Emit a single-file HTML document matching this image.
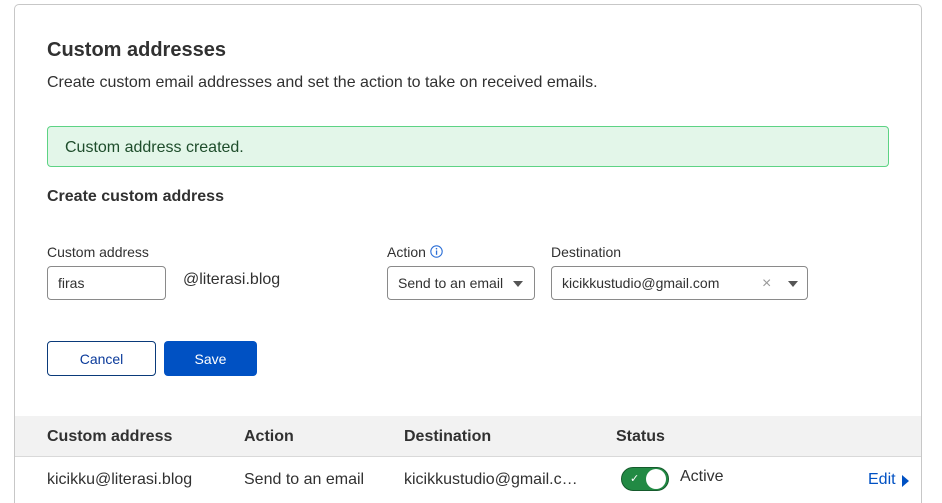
<!DOCTYPE html><html><head><style>
html,body{margin:0;width:942px;height:503px;overflow:hidden}
body{background:#fff;font-family:"Liberation Sans",sans-serif;color:#313131;position:relative}
.a{position:absolute;white-space:nowrap}
.card{position:absolute;left:14px;top:4px;width:906px;height:498px;border:1px solid #c7c7c7;border-bottom:none;border-radius:5px 5px 0 0}
.inp{position:absolute;border:1px solid #8a8a8a;border-radius:4px;height:34px;box-sizing:border-box;font-size:14px;line-height:33px;padding-left:10px}
.tri{position:absolute;width:0;height:0;border-left:5px solid transparent;border-right:5px solid transparent;border-top:6px solid #555}
</style></head><body>
<div class="card"></div>
<div class="a" style="left:47px;top:39px;font-size:20px;font-weight:bold">Custom addresses</div>
<div class="a" style="left:47px;top:74px;font-size:16px">Create custom email addresses and set the action to take on received emails.</div>
<div class="a" style="left:47px;top:126px;width:840px;height:39px;background:#e3f6e9;border:1px solid #5dd384;border-radius:4px"></div>
<div class="a" style="left:65px;top:139px;font-size:16px;color:#1e4d2b">Custom address created.</div>
<div class="a" style="left:47px;top:188px;font-size:16px;font-weight:bold">Create custom address</div>
<div class="a" style="left:47px;top:244px;font-size:14px">Custom address</div>
<div class="a" style="left:387px;top:244px;font-size:14px">Action</div>
<svg class="a" style="left:430px;top:245px" width="13" height="13" viewBox="0 0 13 13"><circle cx="6.5" cy="6.5" r="5.7" fill="none" stroke="#2c6fd6" stroke-width="1.1"/><rect x="5.9" y="5.5" width="1.3" height="4.3" fill="#2c6fd6"/><circle cx="6.5" cy="3.7" r=".8" fill="#2c6fd6"/></svg>
<div class="a" style="left:551px;top:244px;font-size:14px">Destination</div>
<div class="inp" style="left:47px;top:266px;width:119px">firas</div>
<div class="a" style="left:183px;top:271px;font-size:16px">@literasi.blog</div>
<div class="inp" style="left:387px;top:266px;width:148px">Send to an email</div>
<div class="tri" style="left:513px;top:281px"></div>
<div class="inp" style="left:551px;top:266px;width:257px">kicikkustudio@gmail.com</div>
<div class="a" style="left:762px;top:275px;font-size:16px;color:#999">×</div>
<div class="tri" style="left:788px;top:281px"></div>
<div class="a" style="left:47px;top:341px;width:107px;height:33px;border:1px solid #0a3a7a;border-radius:4px;color:#0a3a9a;font-size:14px;text-align:center;line-height:35px">Cancel</div>
<div class="a" style="left:164px;top:341px;width:93px;height:35px;background:#0051c3;border-radius:4px;color:#fff;font-size:14px;text-align:center;line-height:37px">Save</div>
<div class="a" style="left:15px;top:416px;width:906px;height:40px;background:#f2f2f2;border-bottom:1px solid #d9d9d9"></div>
<div class="a" style="left:47px;top:428px;font-size:16px;font-weight:bold">Custom address</div>
<div class="a" style="left:244px;top:428px;font-size:16px;font-weight:bold">Action</div>
<div class="a" style="left:404px;top:428px;font-size:16px;font-weight:bold">Destination</div>
<div class="a" style="left:616px;top:428px;font-size:16px;font-weight:bold">Status</div>
<div class="a" style="left:47px;top:471px;font-size:16px">kicikku@literasi.blog</div>
<div class="a" style="left:244px;top:471px;font-size:16px">Send to an email</div>
<div class="a" style="left:404px;top:471px;font-size:16px">kicikkustudio@gmail.c…</div>
<div class="a" style="left:621px;top:467px;width:48px;height:24px;background:#228a44;border:1px solid #155a2c;border-radius:13px;box-sizing:border-box"></div>
<div class="a" style="left:646px;top:469px;width:20px;height:20px;background:#fff;border-radius:50%"></div>
<div class="a" style="left:630px;top:472px;font-size:11px;color:#fff">✓</div>
<div class="a" style="left:680px;top:468px;font-size:16px">Active</div>
<div class="a" style="left:868px;top:471px;font-size:16px;color:#0051c3">Edit</div>
<div class="a" style="left:902px;top:475px;width:0;height:0;border-top:6px solid transparent;border-bottom:6px solid transparent;border-left:7px solid #0051c3"></div>
</body></html>
